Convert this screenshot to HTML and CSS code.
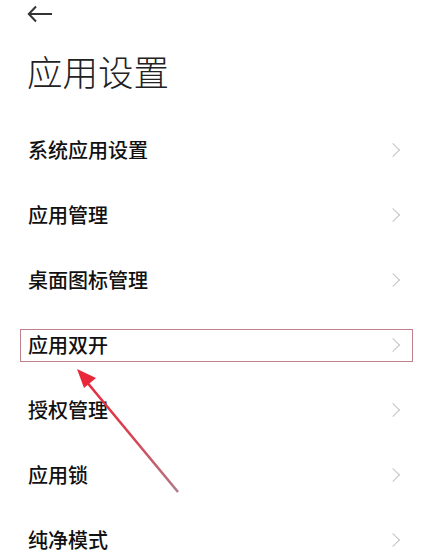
FILE: index.html
```html
<!DOCTYPE html>
<html lang="zh-CN">
<head>
<meta charset="utf-8">
<link rel="stylesheet" href="styles.css">
</head>
<body>
<div class="page">
  <div class="topbar">
    <svg class="back" width="26" height="18" viewBox="0 0 26 18">
      <path d="M25 9H2M9 1.5L1.8 9L9 16.5" fill="none" stroke="#333" stroke-width="2"/>
    </svg>
  </div>
  <h1 class="title">应用设置</h1>
  <ul class="list">
    <li class="row"><span>系统应用设置</span><i class="chev"></i></li>
    <li class="row"><span>应用管理</span><i class="chev"></i></li>
    <li class="row"><span>桌面图标管理</span><i class="chev"></i></li>
    <li class="row marked"><span>应用双开</span><i class="chev"></i><div class="highlight"></div></li>
    <li class="row"><span>授权管理</span><i class="chev"></i></li>
    <li class="row"><span>应用锁</span><i class="chev"></i></li>
    <li class="row"><span>纯净模式</span><i class="chev"></i></li>
  </ul>
  <svg class="pointer" width="428" height="559" viewBox="0 0 428 559">
    <defs>
      <linearGradient id="g" x1="178" y1="492" x2="80" y2="372" gradientUnits="userSpaceOnUse">
        <stop offset="0" stop-color="#b07a8a"/>
        <stop offset="0.5" stop-color="#d9404f"/>
        <stop offset="1" stop-color="#e8283a"/>
      </linearGradient>
    </defs>
    <line x1="178" y1="492" x2="86" y2="381" stroke="url(#g)" stroke-width="2.6"/>
    <polygon points="77,369 96,378 84,388" fill="#e8283a"/>
  </svg>
</div>
</body>
</html>
```
FILE: styles.css
```css
* { box-sizing: border-box; }
html, body { margin: 0; padding: 0; background: #fff; }
body { font-family: "Noto Sans CJK SC", "Noto Sans", sans-serif; color: #1a1a1a; }
.page { position: relative; width: 428px; height: 559px; overflow: hidden; }
.topbar { height: 30px; padding: 5px 0 0 27px; }
.back { display: block; }
.title {
  margin: 0;
  padding: 0 0 0 27px;
  height: 90px;
  line-height: 90px;
  font-size: 35.5px;
  font-weight: 300;
  color: #222;
  margin-top: -4px;
}
.list { list-style: none; margin: 0; padding: 0; margin-top: 1px; }
.row {
  position: relative;
  height: 65px;
  display: flex;
  align-items: center;
  justify-content: space-between;
  padding: 0 26px 0 28px;
  font-size: 20px;
  font-weight: 500;
  color: #111;
}
.chev {
  width: 10px;
  height: 10px;
  border-top: 1.5px solid #c4c4c4;
  border-right: 1.5px solid #c4c4c4;
  transform: rotate(45deg);
  margin-right: 4px;
}
.highlight {
  position: absolute;
  left: 20px;
  top: 17px;
  width: 393px;
  height: 33px;
  border: 1.5px solid #c07f8c;
}
.pointer { position: absolute; left: 0; top: 0; pointer-events: none; }
```
